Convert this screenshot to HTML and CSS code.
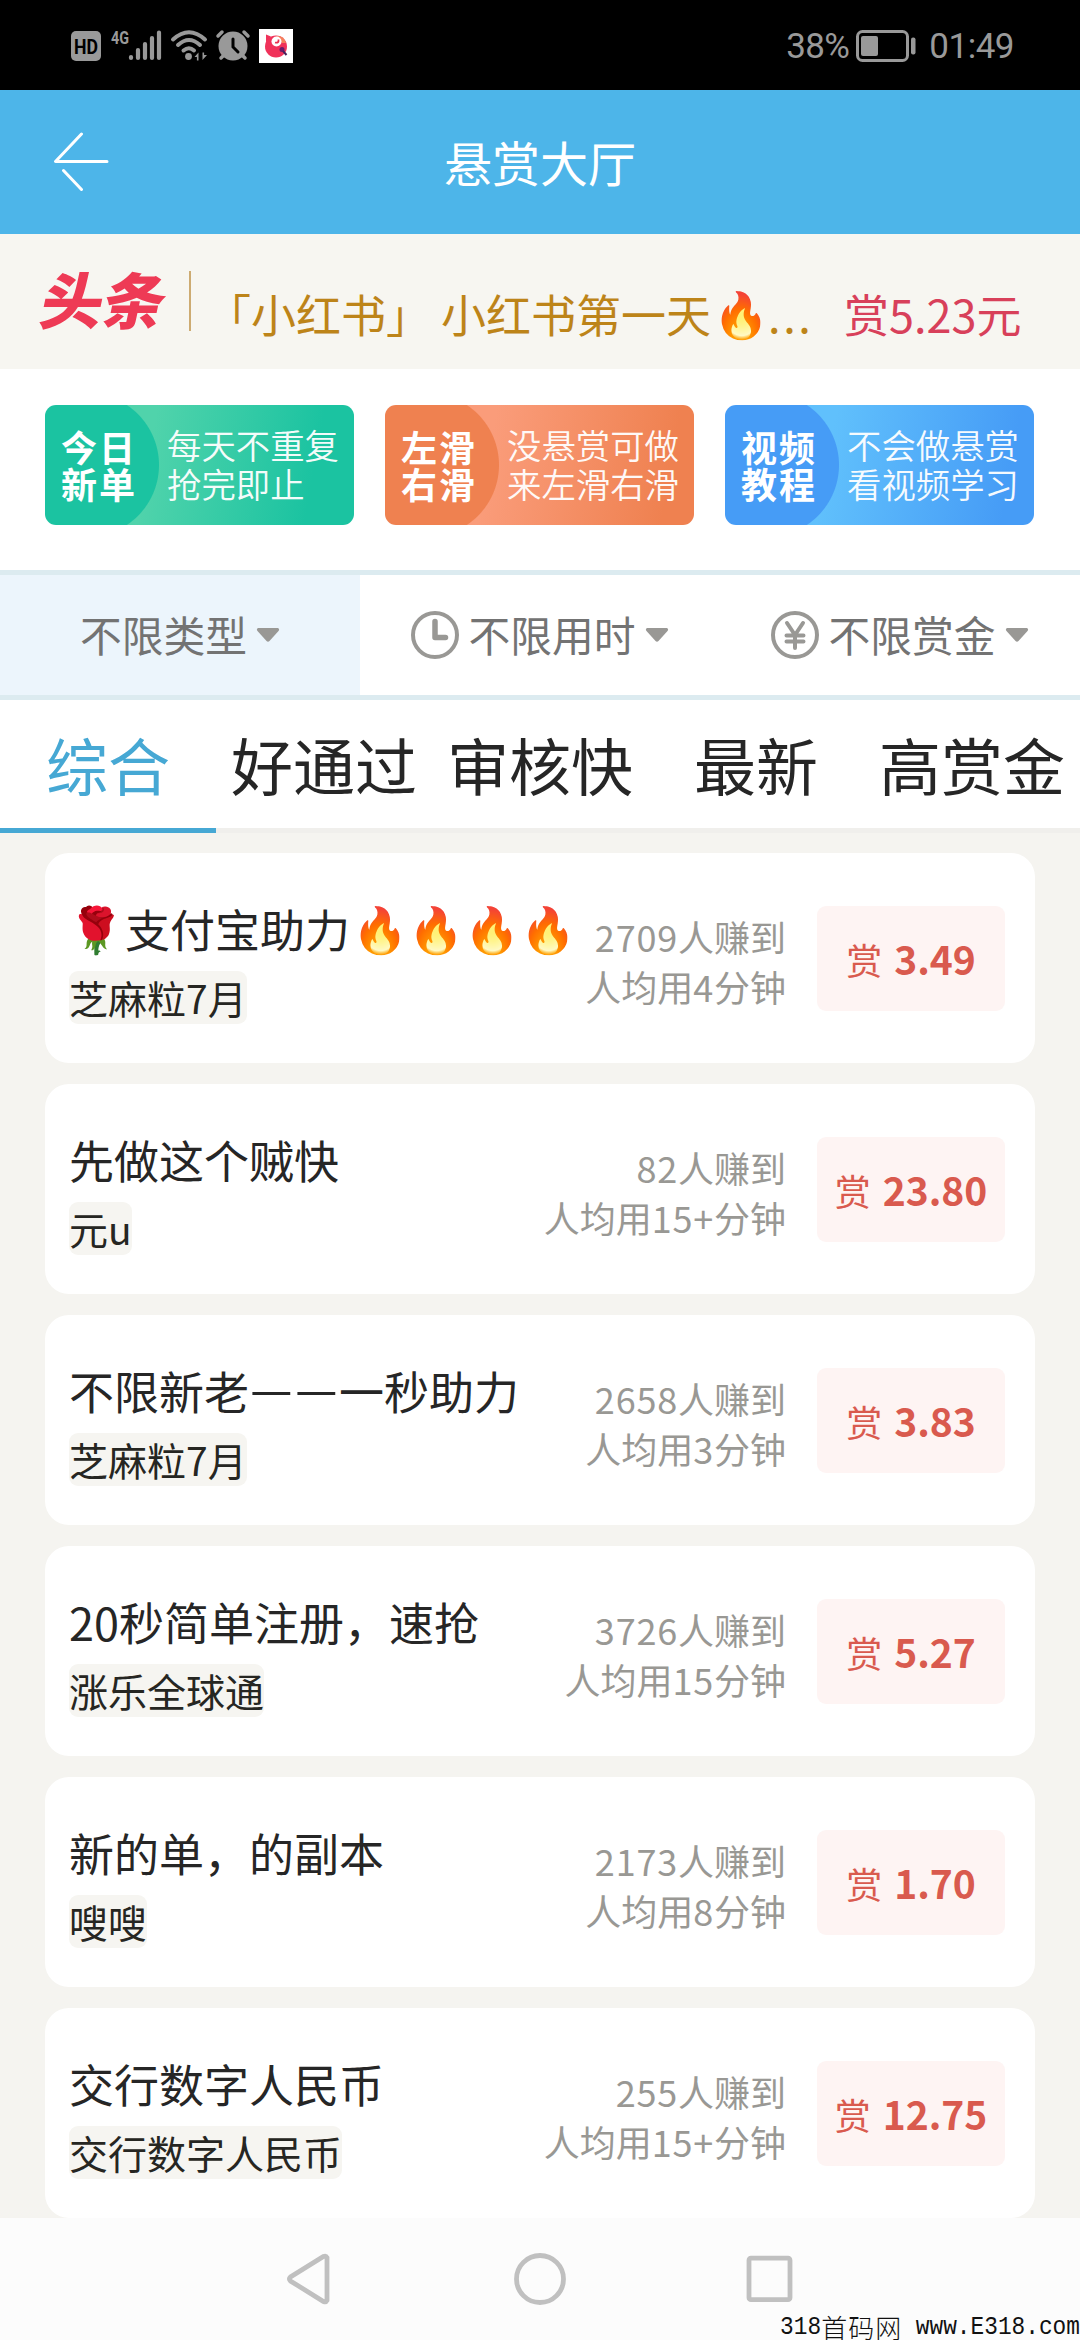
FILE: index.html
```html
<!DOCTYPE html>
<html lang="zh-CN">
<head>
<meta charset="utf-8">
<title>悬赏大厅</title>
<link rel="stylesheet" href="styles.css">
</head>
<body>
<div class="screen">
  <div class="status">
    <div class="status-left">
      <svg class="status-icons" width="230" height="46" viewBox="70 22 230 46">
        <rect x="71" y="31" width="30" height="30" rx="5" fill="#999"/>
        <text x="86" y="53.5" class="hd" text-anchor="middle" textLength="24" lengthAdjust="spacingAndGlyphs">HD</text>
        <text x="111" y="44" class="net" textLength="18" lengthAdjust="spacingAndGlyphs">4G</text>
        <g stroke="#999" stroke-width="4.2" stroke-linecap="round">
          <path d="M131 57v1M138 50v8M145 44v14M152 38v20M159 32.5v25.5"/>
        </g>
        <g fill="none" stroke="#999" stroke-width="4" stroke-linecap="round">
          <path d="M173 39.500q16-14.500 32 0M178 45q11-10 22 0M183.500 50.500q5.500-4.500 10.500 0"/>
        </g>
        <circle cx="188.500" cy="56.500" r="3.400" fill="#999"/>
        <path d="M194.500 57l4-4.500v8h-1.600V57zM207 55l-4.500 5V52.500h1.600V55z" fill="#999"/>
        <circle cx="233" cy="46" r="14.500" fill="#999"/>
        <path d="M233 39v8l5 5" fill="none" stroke="#000" stroke-width="3" stroke-linecap="round"/>
        <path d="M218 36l4-4M248 36l-4-4M221 58l3-3M245 58l-3-3" stroke="#999" stroke-width="3.500" stroke-linecap="round"/>
        <rect x="259" y="29" width="34" height="34" fill="#fff"/>
        <circle cx="276" cy="46.500" r="11" fill="#f0325a"/>
        <path d="M266 34.500l5 2-5 6z" fill="#f0325a"/>
        <path d="M276 36q8-1 10 7l-4 0z" fill="#f5815c"/>
        <circle cx="276.500" cy="41.500" r="5" fill="#fff"/>
        <path d="M275 42.500q4 1 3.500-3" stroke="#e8304f" stroke-width="1.800" fill="none"/>
        <circle cx="282" cy="49.500" r="2.500" fill="#6a1b6c"/>
        <path d="M283 51l3.500 4" stroke="#47205c" stroke-width="2"/>
      </svg>
    </div>
    <div class="status-right">
      <span class="pct">38%</span>
      <svg width="60" height="32" viewBox="0 0 60 32">
        <rect x="1.500" y="1.500" width="50" height="29" rx="5" fill="none" stroke="#999" stroke-width="3"/>
        <rect x="5" y="6" width="17" height="20" rx="2" fill="#999"/>
        <rect x="55" y="7.500" width="4.500" height="17" rx="2" fill="#999"/>
      </svg>
      <span class="time">01:49</span>
    </div>
  </div>

  <header class="header">
    <svg class="back" width="58" height="60" viewBox="0 0 58 60">
      <path d="M28.500 2L2.500 29.500H54M10.500 38.500L28.500 57.500" fill="none" stroke="#fff" stroke-width="3" stroke-linecap="round" stroke-linejoin="round"/>
    </svg>
    <h1>悬赏大厅</h1>
  </header>

  <div class="headline">
    <b class="toutiao">头条</b>
    <i class="bar"></i>
    <span class="news">「小红书」 小红书第一天<span class="emo">🔥</span><span class="dots">...</span></span>
    <span class="bounty">赏5.23元</span>
  </div>

  <div class="banners">
    <div class="banner green"><b>今日<br>新单</b><span>每天不重复<br>抢完即止</span></div>
    <div class="banner orange"><b>左滑<br>右滑</b><span>没悬赏可做<br>来左滑右滑</span></div>
    <div class="banner blue"><b>视频<br>教程</b><span>不会做悬赏<br>看视频学习</span></div>
  </div>

  <div class="filters">
    <div class="filter on"><span>不限类型</span><svg class="tri" width="24" height="14" viewBox="0 0 24 14"><path d="M2 0h20q2 1 .5 3l-9 10q-1.500 1.500-3 0l-9-10Q0 1 2 0z"/></svg></div>
    <div class="filter">
      <svg class="ico" width="48" height="48" viewBox="0 0 48 48"><circle cx="24" cy="24" r="22"/><path class="thick" d="M24 10.500v16h10.500"/></svg>
      <span>不限用时</span><svg class="tri" width="24" height="14" viewBox="0 0 24 14"><path d="M2 0h20q2 1 .5 3l-9 10q-1.500 1.500-3 0l-9-10Q0 1 2 0z"/></svg></div>
    <div class="filter">
      <svg class="ico" width="48" height="48" viewBox="0 0 48 48"><circle cx="24" cy="24" r="22"/><path d="M16 12l8 12 8-12M24 24v13M15.500 24.500h17M15.500 30.500h17"/></svg>
      <span>不限赏金</span><svg class="tri" width="24" height="14" viewBox="0 0 24 14"><path d="M2 0h20q2 1 .5 3l-9 10q-1.500 1.500-3 0l-9-10Q0 1 2 0z"/></svg></div>
  </div>

  <nav class="tabs">
    <div class="tab on">综合</div><div class="tab">好通过</div><div class="tab">审核快</div><div class="tab">最新</div><div class="tab">高赏金</div>
  </nav>

  <main class="list">
    <article class="card">
      <div class="info"><h2><span class="emo rose">🌹</span>支付宝助力<span class="emo">🔥</span><span class="emo">🔥</span><span class="emo">🔥</span><span class="emo">🔥</span></h2><span class="tag">芝麻粒7月</span></div>
      <div class="stat"><span class="num">2709</span>人赚到<br>人均用<span class="num">4</span>分钟</div>
      <div class="price">赏<b>3.49</b></div>
    </article>
    <article class="card">
      <div class="info"><h2>先做这个贼快</h2><span class="tag">元u</span></div>
      <div class="stat"><span class="num">82</span>人赚到<br>人均用<span class="num">15+</span>分钟</div>
      <div class="price">赏<b>23.80</b></div>
    </article>
    <article class="card">
      <div class="info"><h2>不限新老<span class="dash">—</span><span class="dash">—</span>一秒助力</h2><span class="tag">芝麻粒7月</span></div>
      <div class="stat"><span class="num">2658</span>人赚到<br>人均用<span class="num">3</span>分钟</div>
      <div class="price">赏<b>3.83</b></div>
    </article>
    <article class="card">
      <div class="info"><h2>20秒简单注册，速抢</h2><span class="tag">涨乐全球通</span></div>
      <div class="stat"><span class="num">3726</span>人赚到<br>人均用<span class="num">15</span>分钟</div>
      <div class="price">赏<b>5.27</b></div>
    </article>
    <article class="card">
      <div class="info"><h2>新的单，的副本</h2><span class="tag">嗖嗖</span></div>
      <div class="stat"><span class="num">2173</span>人赚到<br>人均用<span class="num">8</span>分钟</div>
      <div class="price">赏<b>1.70</b></div>
    </article>
    <article class="card">
      <div class="info"><h2>交行数字人民币</h2><span class="tag">交行数字人民币</span></div>
      <div class="stat"><span class="num">255</span>人赚到<br>人均用<span class="num">15+</span>分钟</div>
      <div class="price">赏<b>12.75</b></div>
    </article>
  </main>

  <footer class="navbar">
    <svg width="50" height="52" viewBox="0 0 50 52"><path d="M41 4.500v43q-1 2-3.500 1L4.500 28q-2-2 0-4L37.500 3.500q2.500-1 3.500 1z"/></svg>
    <svg width="52" height="52" viewBox="0 0 52 52"><circle cx="26" cy="26" r="23.500"/></svg>
    <svg width="52" height="52" viewBox="0 0 52 52"><rect x="5" y="5.200" width="41" height="41.500" rx="2"/></svg>
    <div class="mark"><span class="la">318</span><span class="zh">首码网</span><span class="la"> www.E318.com</span></div>
  </footer>
</div>
</body>
</html>
```

FILE: styles.css
```css
* { box-sizing: border-box; margin: 0; padding: 0; }
body { width: 1080px; height: 2340px; overflow: hidden; background: #f5f4f0; font-family: "Noto Sans CJK SC", "Noto Sans", sans-serif; }
svg { display: block; flex: none; }
.screen { width: 1080px; height: 2340px; display: flex; flex-direction: column; }

.status { height: 90px; background: #000; color: #999; display: flex; justify-content: space-between; padding: 0 66px 0 70px; }
.status-left { padding-top: 22px; }
.hd { font: 700 21px Roboto, sans-serif; fill: #000; }
.net { font: 700 19px Roboto, sans-serif; fill: #999; }
.status-right { display: flex; align-items: center; font: 400 35px/90px Roboto, sans-serif; padding-top: 2px; white-space: nowrap; }
.status-right svg { margin: 0 13px 0 7px; }
.pct { letter-spacing: -0.6px; padding-top: 2px; }
.time { letter-spacing: -0.5px; padding-top: 2px; }

.header { height: 144px; background: #4db5e9; display: grid; grid-template-columns: 160px 1fr 160px; align-items: center; }
.back { margin-left: 53px; }
.header h1 { color: #fff; text-align: center; font-size: 48px; line-height: 60px; font-weight: 400; padding-bottom: 3px; }

.headline { height: 135px; background: #f7f6f1; display: flex; align-items: flex-start; padding-left: 44px; white-space: nowrap; }
.toutiao { width: 145px; margin-top: 34px; color: #ee3a55; font-size: 61px; line-height: 60px; font-weight: 900; transform: skewX(-12deg) scaleX(1.02); transform-origin: 60px 30px; }
.bar { width: 2px; height: 60px; margin-top: 37px; background: #cdab72; }
.news { width: 617px; height: 60px; margin: 50px 0 0 15px; color: #bd8419; font-size: 45px; line-height: 60px; }
.emo { display: inline-block; width: 56px; height: 50px; padding-left: 2px; text-align: center; line-height: 64px; vertical-align: top; font-family: "Noto Color Emoji", "Noto Sans CJK SC", sans-serif; }
.rose { text-indent: -3px; }
.dots { letter-spacing: 2.6px; margin-left: 1px; }
.bounty { margin: 50px 0 0 21px; color: #d8405a; font-size: 45px; line-height: 60px; }

.banners { height: 201px; background: #fff; display: flex; gap: 31px; padding: 36px 45px 0; }
.banner { width: 309px; height: 120px; border-radius: 11px; color: #fff; display: flex; align-items: center; white-space: nowrap; }
.banner b { width: 122px; padding: 0 0 1px 16px; font-size: 36px; line-height: 37px; font-weight: 700; letter-spacing: 2px; }
.banner span { font-size: 34.4px; line-height: 39.500px; font-weight: 350; padding-bottom: 2px; opacity: .95; }
.green { background: radial-gradient(circle at 42px 60px, #1bc3a1 71.5px, transparent 72.5px), linear-gradient(100deg, #50d3ab 34%, #1bc3a1 85%); }
.orange { background: radial-gradient(circle at 42px 60px, #ef8150 71.5px, transparent 72.5px), linear-gradient(100deg, #fa9c7a 34%, #ef8150 90%); }
.blue { background: radial-gradient(circle at 42px 60px, #469cf6 71.5px, transparent 72.5px), linear-gradient(100deg, #60c0fc 34%, #469cf6 90%); }

.filters { height: 130px; background: #fff; border-top: 5px solid #dcebf0; border-bottom: 5px solid #dcebf0; display: grid; grid-template-columns: repeat(3, 1fr); }
.filter { display: flex; align-items: center; justify-content: center; color: #737373; font-size: 41.8px; line-height: 60px; white-space: nowrap; }
.filter span { padding-bottom: 2px; }
.filter.on { background: #ecf5fc; }
.ico { margin-right: 9px; fill: none; stroke: #999895; stroke-width: 4; stroke-linecap: round; stroke-linejoin: round; }
.ico .thick { stroke-width: 5.5; }
.tri { margin-left: 9px; fill: #999895; }

.tabs { height: 132px; background: #fff; display: grid; grid-template-columns: repeat(5, 216px); }
.tab { border-bottom: 5px solid #f0efec; text-align: center; font-size: 62px; line-height: 128px; color: #262626; white-space: nowrap; }
.tab.on { color: #46a8d4; border-color: #46a8d4; }

.list { height: 1386px; padding: 21px 45px 0; display: flex; flex-direction: column; gap: 21px; }
.card { height: 210px; flex: none; background: #fff; border-radius: 24px; display: flex; align-items: center; padding: 0 30px 0 24px; white-space: nowrap; }
.info { flex: 1; align-self: flex-start; padding-top: 46px; }
.info h2 { height: 60px; font-size: 45px; line-height: 60px; font-weight: 400; color: #262626; }
.dash { display: inline-block; width: 45px; text-align: center; transform: translateY(-5px) scale(1.05, 1.1); }
.tag { display: inline-block; height: 53px; margin-top: 12px; border-radius: 9px; background: #f6f5f1; font-size: 39px; line-height: 52px; color: #262622; }
.stat { font-size: 36px; line-height: 50px; color: #999894; text-align: right; margin: 5px 31px 0 0; }
.num { letter-spacing: .8px; }
.price { width: 188px; height: 105px; border-radius: 9px; background: #fef4f3; color: #d95a4e; font-size: 36px; line-height: 105px; text-align: center; }
.price b { font-size: 39px; font-weight: 700; margin-left: 12px; }

.navbar { height: 122px; background: #fcfcfc; display: grid; grid-template-columns: 50px 52px 52px; justify-content: center; column-gap: 178px; padding: 35px 0 0 2px; position: relative; }
.navbar svg { fill: none; stroke: #c0c0c0; stroke-width: 4.8; }
.mark { position: absolute; right: 0; bottom: 0; display: flex; align-items: center; color: #111; height: 26px; white-space: pre; }
.la { font: 22.8px/22px "Liberation Mono", monospace; transform: scaleY(1.15); }
.zh { font-size: 26px; line-height: 26px; font-weight: 300; letter-spacing: 1px; }
```
